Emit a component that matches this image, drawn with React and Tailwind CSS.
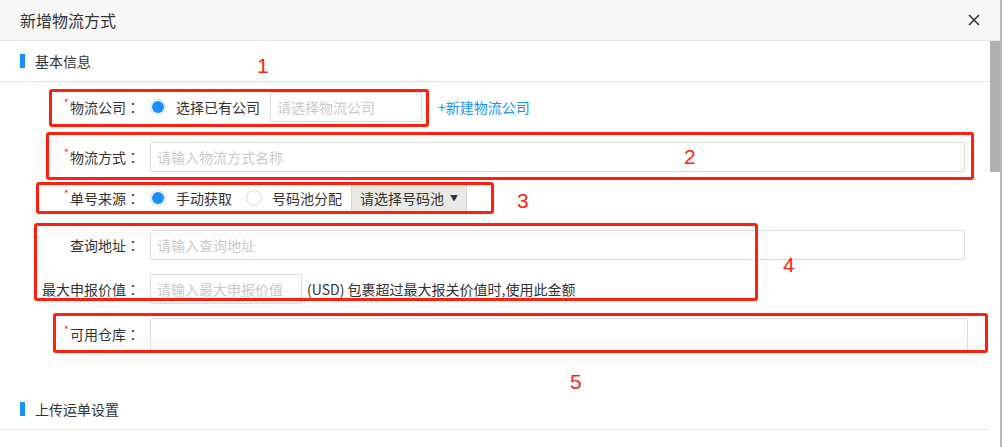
import React from 'react';

const font = { fontFamily: '"Noto Sans CJK SC", "Noto Sans", sans-serif' };

const Star = () => <span className="text-[#ff3b30] text-[11px] leading-none relative -top-[5px] mr-[1px]">*</span>;

const Label = ({ required, children }) => (
    <div className="w-[140px] flex items-center justify-end text-[14px] text-[#333] whitespace-nowrap">
        {required && <Star />}
        <span>{children}</span>
        <span className="w-[14px] text-center" style={{ fontFamily: '"Noto Sans CJK TC", sans-serif' }}>：</span>
    </div>
);

const Radio = ({ checked }) => (
    <span className="w-[16px] h-[16px] rounded-full border border-[#d9d9d9] bg-white flex items-center justify-center shrink-0">
        {checked && <span className="w-[12px] h-[12px] rounded-full bg-[#1890ff]" />}
    </span>
);

const Input = ({ placeholder, className = '' }) => (
    <div className={`h-[30px] border border-[#dcdcdc] rounded-[2px] bg-white flex items-center px-[6px] text-[14px] text-[#c9c9c9] whitespace-nowrap ${className}`}>
        {placeholder}
    </div>
);

const Section = ({ title }) => (
    <div className="h-[41px] flex items-center pl-5 border-b border-[#e6e6e6]">
        <span className="w-[5px] h-[14px] bg-[#1890ff]" />
        <span className="ml-[10px] text-[14px] text-[#333]">{title}</span>
    </div>
);

const Box = ({ className }) => (
    <div className={`absolute border-[3px] border-[#ff1f0f] rounded-[3px] ${className}`} />
);

const Num = ({ className, children }) => (
    <div className={`absolute text-[21px] leading-none text-[#ff1f0f] ${className}`} style={{ fontFamily: '"Liberation Sans", sans-serif' }}>{children}</div>
);

export default function App() {
    return (
        <div className="relative w-[1002px] h-[447px] overflow-hidden bg-white border-r-2 border-[#b8b8b8]" style={font}>
            <div className="h-[41px] bg-[#f7f7f7] border-b border-[#e6e6e6] flex items-center justify-between pl-5 pr-[20px]">
                <span className="text-[16px] text-[#333]">新增物流方式</span>
                <svg width="12" height="12" viewBox="0 0 12 12" className="text-[#333]">
                    <path d="M1 1 L11 11 M11 1 L1 11" stroke="currentColor" strokeWidth="1.5" />
                </svg>
            </div>

            <div className="flex">
                <div className="flex-1 min-w-0">
                    <Section title="基本信息" />

                    <div className="flex items-center mt-[10px] pr-[25px]">
                        <Label required>物流公司</Label>
                        <div className="ml-[10px] flex items-center">
                            <Radio checked />
                            <span className="ml-[10px] text-[14px] text-[#333]">选择已有公司</span>
                            <Input placeholder="请选择物流公司" className="ml-[10px] w-[152px]" />
                            <span className="ml-[16px] text-[14px] text-[#1890ff]">+新建物流公司</span>
                        </div>
                    </div>

                    <div className="flex items-center mt-[20px] pr-[25px]">
                        <Label required>物流方式</Label>
                        <Input placeholder="请输入物流方式名称" className="ml-[10px] flex-1" />
                    </div>

                    <div className="flex items-center mt-[11px] pr-[25px]">
                        <Label required>单号来源</Label>
                        <div className="ml-[10px] flex items-center">
                            <Radio checked />
                            <span className="ml-[10px] text-[14px] text-[#333]">手动获取</span>
                            <span className="ml-[14px]"><Radio /></span>
                            <span className="ml-[10px] text-[14px] text-[#333]">号码池分配</span>
                            <div className="ml-[9px] w-[116px] h-[30px] bg-[#e9e9e5] border border-[#d6d6d0] rounded-[2px] flex items-center justify-between pl-[8px] pr-[8px] text-[14px] text-[#333]">
                                <span>请选择号码池</span>
                                <span className="text-[8px]">▼</span>
                            </div>
                        </div>
                    </div>

                    <div className="flex items-center mt-[17px] pr-[25px]">
                        <Label>查询地址</Label>
                        <Input placeholder="请输入查询地址" className="ml-[10px] flex-1" />
                    </div>

                    <div className="flex items-center mt-[14px] pr-[25px]">
                        <Label>最大申报价值</Label>
                        <Input placeholder="请输入最大申报价值" className="ml-[10px] w-[152px]" />
                        <span className="ml-[5px] text-[14px] text-[#333]">(USD) 包裹超过最大报关价值时,使用此金额</span>
                    </div>

                    <div className="flex items-center mt-[14px] pr-[22px]">
                        <Label required>可用仓库</Label>
                        <Input className="ml-[10px] flex-1 h-[33px]" />
                    </div>

                    <div className="mt-[38px]">
                        <Section title="上传运单设置" />
                    </div>
                    <div className="h-[18px] border-b border-[#e6e6e6]" />
                </div>

                <div className="w-[10px] shrink-0">
                    <div className="h-[131px] bg-[#b0b0b0]" />
                </div>
            </div>

            <Box className="left-[49px] top-[89px] w-[380px] h-[38px]" />
            <Box className="left-[46px] top-[132px] w-[928px] h-[48px]" />
            <Box className="left-[36px] top-[182px] w-[458px] h-[32px]" />
            <Box className="left-[34px] top-[223px] w-[724px] h-[78px]" />
            <Box className="left-[53px] top-[313px] w-[935px] h-[40px]" />

            <Num className="left-[257px] top-[55px]">1</Num>
            <Num className="left-[684px] top-[146px]">2</Num>
            <Num className="left-[517px] top-[190px]">3</Num>
            <Num className="left-[783px] top-[254px]">4</Num>
            <Num className="left-[570px] top-[371px]">5</Num>
        </div>
    );
}
